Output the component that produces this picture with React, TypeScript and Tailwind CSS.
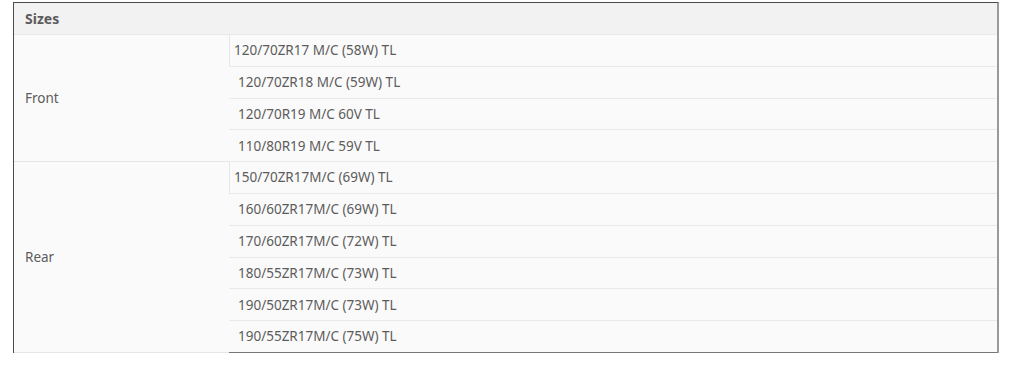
import React from "react";

const groups = [
  {
    label: "Front",
    sizes: [
      "120/70ZR17 M/C (58W) TL",
      "120/70ZR18 M/C (59W) TL",
      "120/70R19 M/C 60V TL",
      "110/80R19 M/C 59V TL",
    ],
  },
  {
    label: "Rear",
    sizes: [
      "150/70ZR17M/C (69W) TL",
      "160/60ZR17M/C (69W) TL",
      "170/60ZR17M/C (72W) TL",
      "180/55ZR17M/C (73W) TL",
      "190/50ZR17M/C (73W) TL",
      "190/55ZR17M/C (75W) TL",
    ],
  },
];

export default function App() {
  return (
    <div
      className="w-[1024px] h-[367px] bg-white pt-[2px] pl-[13px] text-[13.5px] text-[#5c5c5c]"
      style={{ fontFamily: '"Noto Sans", "Open Sans", sans-serif' }}
    >
      <div className="w-[986px] border-t border-l border-t-[#4a4a4a] border-l-[#4a4a4a] border-r-2 border-r-[#9a9a9a]">
        <div className="h-[32px] bg-[#f2f2f2] border-b border-[#e9e9e9] flex items-center pl-[11px] font-bold text-[14px]">
          Sizes
        </div>
        {groups.map((g, gi) => (
          <div key={g.label} className="flex">
            <div className="w-[215px] bg-[#fafafa] border-b border-[#e6e6e6] flex items-center pl-[11px]">
              {g.label}
            </div>
            <div className="flex-1 flex flex-col">
              {g.sizes.map((s, i) => {
                const last = gi === groups.length - 1 && i === g.sizes.length - 1;
                return (
                  <div
                    key={s}
                    className={
                      "h-[31.8px] bg-[#fafafa] flex items-center border-b " +
                      (last ? "border-b-[#777777] " : "border-b-[#e9e9e9] ") +
                      (i === 0 ? "border-l border-l-[#e6e6e6] pl-[4px]" : "pl-[9px]")
                    }
                  >
                    {s}
                  </div>
                );
              })}
            </div>
          </div>
        ))}
      </div>
    </div>
  );
}
